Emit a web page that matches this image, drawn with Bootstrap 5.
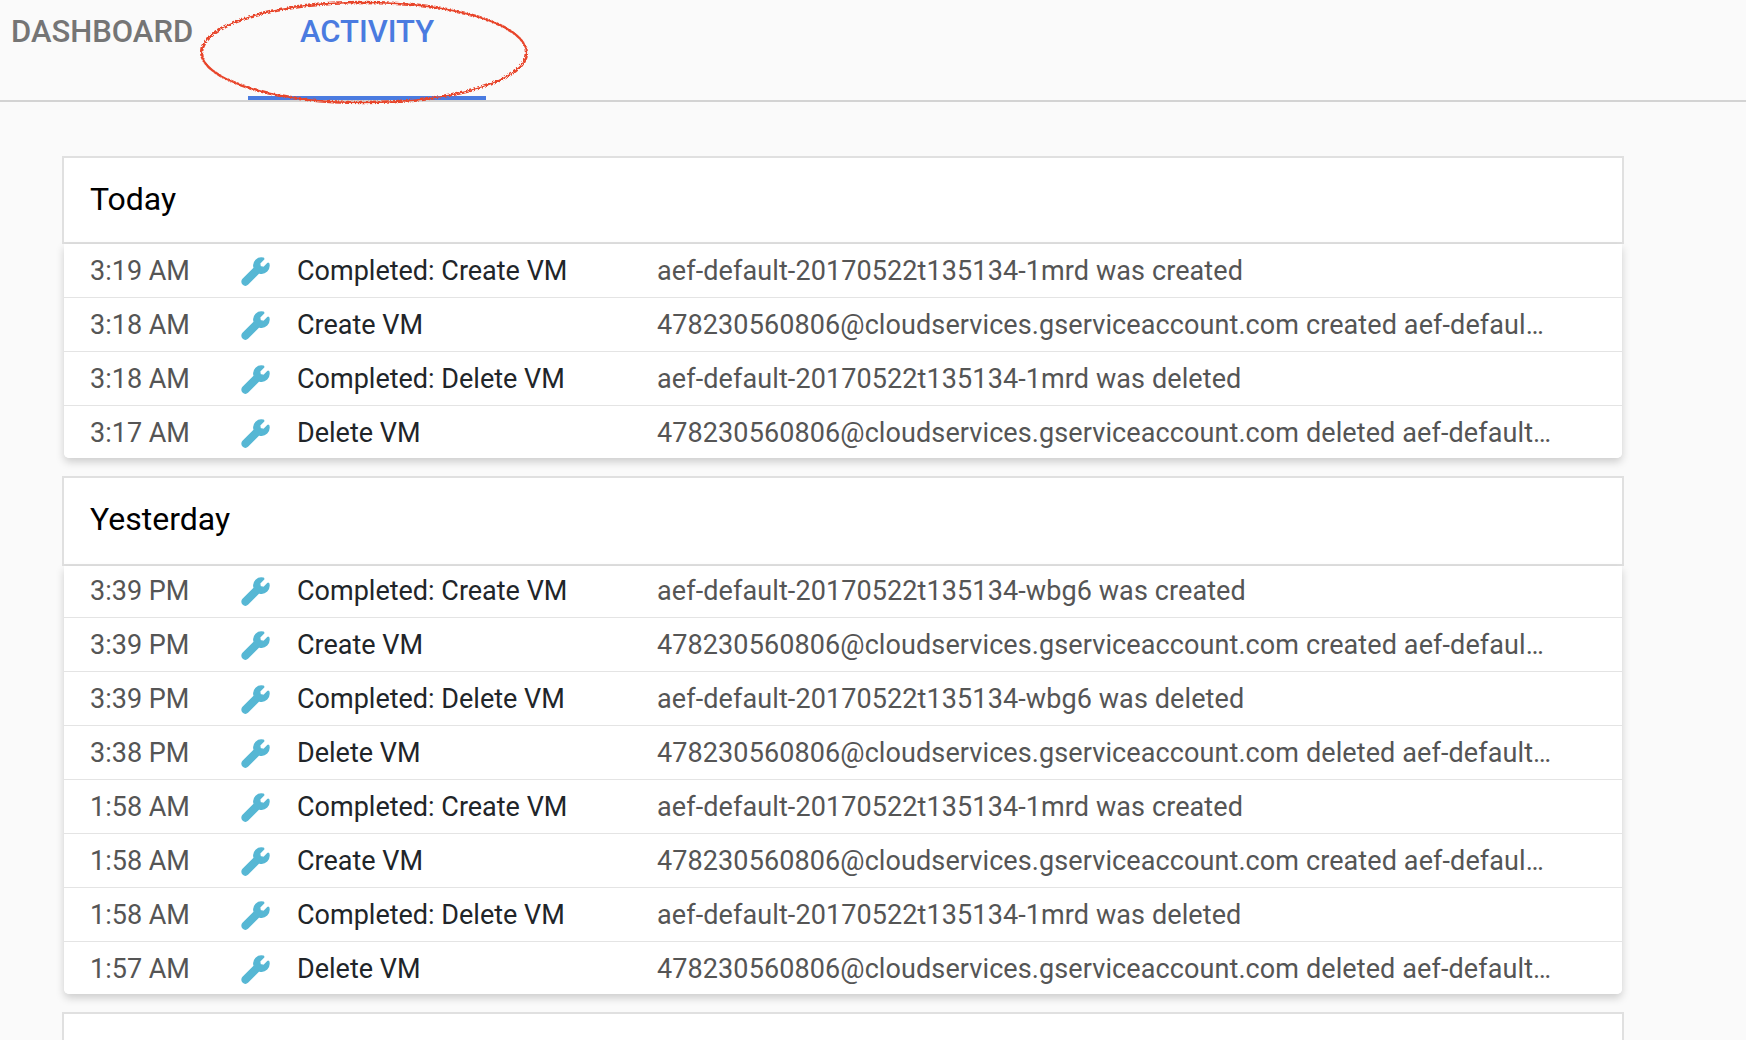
<!DOCTYPE html>
<html lang="en"><head><meta charset="utf-8"><title>Activity</title>
<link href="https://cdn.jsdelivr.net/npm/bootstrap@5.3.0/dist/css/bootstrap.min.css" rel="stylesheet">
<style>
html,body{height:1040px;overflow:hidden}
body{background:#fafafa;font-family:Roboto,"Liberation Sans",sans-serif;color:#000}
.topbar{height:102px;border-bottom:2px solid #d3d3d3;position:relative}
.tab-item{font-size:31px;font-weight:500;line-height:1;color:#757575;padding-top:16px;height:100px;text-decoration:none;text-align:center}
.tab-dash{width:248px;padding-left:11px;text-align:left}
.tab-act{width:238px;color:#4a7be0;border-bottom:4px solid #4a7be0}
.ring{position:absolute;left:200px;top:0;overflow:visible}
.feed{padding:54px 0 0 62px;width:1624px}
.daycard{border:0;border-radius:0;background:transparent;margin-bottom:18px}
.dayhead{background:#fff;border:2px solid #e0e0e0;border-radius:0!important;font-size:32px;line-height:1;padding:25px 26px 0;height:88px}
.daycard + .daycard .dayhead{height:90px}
.dayrows{margin:0 2px;box-shadow:0 4px 8px rgba(0,0,0,.18);border-radius:0}
.dayrow{height:54px;padding:2px 0 0;border:0;border-bottom:2px solid #e4e4e4;background:#fff;font-size:27px;align-items:center}
.dayrow:last-child{border-bottom:0;height:52px}
.daycard + .daycard .dayrow:first-child{height:52px;padding-top:0}
.tm{width:176px;padding-left:26px;color:#555}
.ic{width:57px;padding-left:2px;line-height:0}
.ic svg{width:27px;height:27px;fill:#56b7d4;stroke:#56b7d4;stroke-width:26px;stroke-linejoin:round;overflow:visible}
.nm{width:360px}
.ds{width:894.5px;color:#555;letter-spacing:.1px}
</style></head><body>
<div class="topbar d-flex">
<a class="tab-item tab-dash" href="#">DASHBOARD</a>
<a class="tab-item tab-act" href="#">ACTIVITY</a>
<svg class="ring" width="330" height="106"><filter id="rough"><feTurbulence baseFrequency=".35" numOctaves="2" seed="3"/><feDisplacementMap in="SourceGraphic" scale="2"/></filter><ellipse cx="163.5" cy="52" rx="162.5" ry="50" fill="none" stroke="#e8452c" stroke-width="2.4" filter="url(#rough)"/></svg>
</div>
<div class="feed" id="feed"></div>
<script>
var W='<svg viewBox="0 0 512 512"><path d="M507.73 109.1c-2.24-9.03-13.54-12.09-20.12-5.51l-74.36 74.36-67.88-11.31-11.31-67.88 74.36-74.36c6.62-6.62 3.43-17.9-5.66-20.16-47.38-11.74-99.55.91-136.58 37.93-39.64 39.64-50.55 97.1-34.05 147.2L18.74 402.76c-24.99 24.99-24.99 65.51 0 90.5 24.99 24.99 65.51 24.99 90.5 0l213.21-213.21c50.12 16.71 107.47 5.68 147.37-34.22 37.07-37.07 49.7-89.32 37.91-136.73z"/></svg>';
var A='478230560806@cloudservices.gserviceaccount.com ',P='aef-default-20170522t135134-';
function set(id,t){return [
[t[3],'Completed: Create VM',P+id+' was created'],
[t[2],'Create VM',A+'created '+P+id],
[t[1],'Completed: Delete VM',P+id+' was deleted'],
[t[0],'Delete VM',A+'deleted '+P+id]];}
var days=[['Today',set('1mrd',['3:17 AM','3:18 AM','3:18 AM','3:19 AM'])],
['Yesterday',set('wbg6',['3:38 PM','3:39 PM','3:39 PM','3:39 PM']).concat(set('1mrd',['1:57 AM','1:58 AM','1:58 AM','1:58 AM']))],
['',[]]];
document.getElementById('feed').innerHTML=days.map(function(d){
return '<div class="card daycard"><div class="card-header dayhead">'+d[0]+'</div><div class="list-group list-group-flush dayrows">'+d[1].map(function(r){
return '<div class="list-group-item d-flex dayrow"><div class="tm flex-shrink-0">'+r[0]+'</div><div class="ic flex-shrink-0">'+W+'</div><div class="nm flex-shrink-0">'+r[1]+'</div><div class="ds text-truncate">'+r[2]+'</div></div>';
}).join('')+'</div></div>';}).join('');
</script>
<script src="https://cdn.jsdelivr.net/npm/bootstrap@5.3.0/dist/js/bootstrap.bundle.min.js"></script>
</body></html>
